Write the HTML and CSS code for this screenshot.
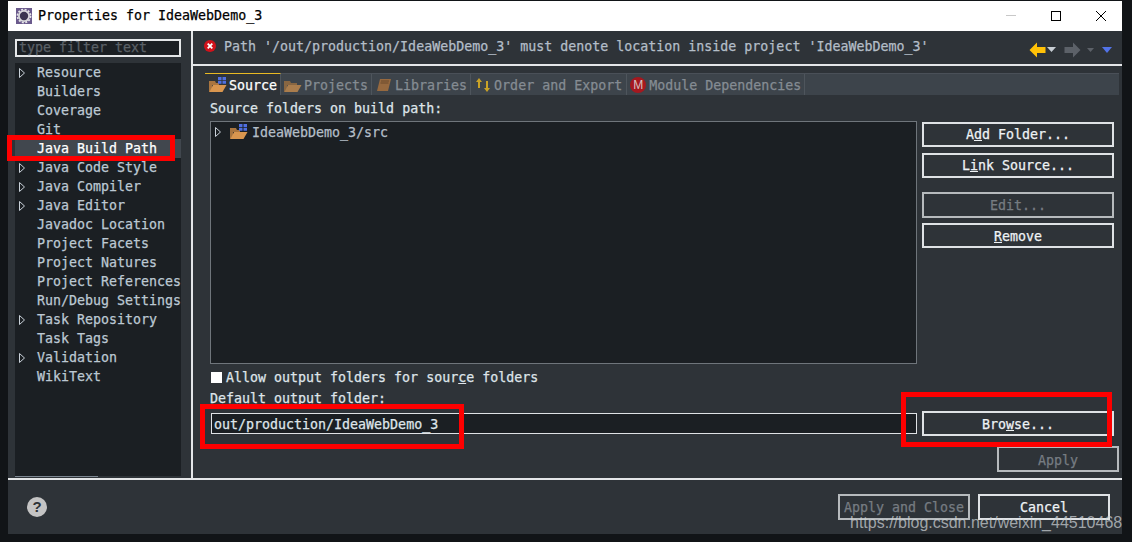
FILE: index.html
```html
<!DOCTYPE html>
<html lang="en">
<head>
<meta charset="utf-8">
<title>Properties for IdeaWebDemo_3</title>
<link rel="stylesheet" href="styles.css">
</head>
<body>
<svg class="defs" width="0" height="0" aria-hidden="true">
  <symbol id="arrow" viewBox="0 0 8 12"><path d="M1.5 1.5 L6.5 6 L1.5 10.5 Z" fill="none" stroke="#c9d1d9" stroke-width="1"/></symbol>
  <symbol id="folder" viewBox="0 0 18 16"><path d="M0 4 H6 L7 6 H13 V8 H0 Z" fill="#a9753f"/><path d="M0 6 H3 V15 H0 Z" fill="#a9753f"/><path d="M4 8 H17.5 L13.5 15 H0.5 Z" fill="#d9964f"/></symbol>
  <symbol id="srcfolder" viewBox="0 0 18 16"><path d="M0 4 H6 L7 6 H10 V8 H0 Z" fill="#a9753f"/><path d="M0 6 H3 V15 H0 Z" fill="#a9753f"/><path d="M4 8 H17.5 L13.5 15 H0.5 Z" fill="#d9964f"/><path d="M9 0 H12.5 V3 H9 Z M13.5 0 H17 V3 H13.5 Z M9 3.8 H12.5 V6.8 H9 Z M13.5 3.8 H17 V6.8 H13.5 Z" fill="#4f6fe0"/></symbol>
</svg>
<div class="window">
  <header class="titlebar">
    <svg class="appicon" width="16" height="16" viewBox="0 0 16 16"><rect width="16" height="16" fill="#6a5a8c"/><circle cx="8" cy="8" r="6" fill="#d8d8dc"/><circle cx="8" cy="8" r="6.6" fill="none" stroke="#e8e8ea" stroke-width="1.6" stroke-dasharray="2 1.5"/><circle cx="8" cy="8" r="4.2" fill="#3a3450"/></svg>
    <span class="title">Properties for IdeaWebDemo_3</span>
    <div class="winctl">
      <svg width="10" height="2" viewBox="0 0 10 2"><rect width="10" height="1" fill="#c8c8c8"/></svg>
      <svg width="10" height="10" viewBox="0 0 10 10"><rect x=".5" y=".5" width="9" height="9" fill="none" stroke="#000"/></svg>
      <svg width="10" height="10" viewBox="0 0 10 10"><path d="M0 0 L10 10 M10 0 L0 10" stroke="#000" stroke-width="1"/></svg>
    </div>
  </header>
  <div class="main">
    <aside class="sidebar">
      <div class="filter"><span class="filter-text">type filter text</span></div>
      <ul class="tree">
        <li class="node"><svg class="arrow"><use href="#arrow"/></svg>Resource</li>
        <li class="node">Builders</li>
        <li class="node">Coverage</li>
        <li class="node">Git</li>
        <li class="node selected">Java Build Path</li>
        <li class="node"><svg class="arrow"><use href="#arrow"/></svg>Java Code Style</li>
        <li class="node"><svg class="arrow"><use href="#arrow"/></svg>Java Compiler</li>
        <li class="node"><svg class="arrow"><use href="#arrow"/></svg>Java Editor</li>
        <li class="node">Javadoc Location</li>
        <li class="node">Project Facets</li>
        <li class="node">Project Natures</li>
        <li class="node">Project References</li>
        <li class="node">Run/Debug Settings</li>
        <li class="node"><svg class="arrow"><use href="#arrow"/></svg>Task Repository</li>
        <li class="node">Task Tags</li>
        <li class="node"><svg class="arrow"><use href="#arrow"/></svg>Validation</li>
        <li class="node">WikiText</li>
      </ul>
      <div class="hscroll"></div>
    </aside>
    <section class="content">
      <div class="message">
        <svg class="erricon" width="12" height="12" viewBox="0 0 12 12"><circle cx="6" cy="6" r="6" fill="#d0121b"/><path d="M3.7 3.7 L8.3 8.3 M8.3 3.7 L3.7 8.3" stroke="#fff" stroke-width="1.8"/></svg>
        <span class="msg-text">Path '/out/production/IdeaWebDemo_3' must denote location inside project 'IdeaWebDemo_3'</span>
        <div class="nav">
          <svg width="17" height="16" viewBox="0 0 17 16"><path d="M8 0.5 L0.5 8 L8 15.5 V11 H16.5 V5 H8 Z" fill="#ffc107"/></svg>
          <svg class="caret" width="9" height="5" viewBox="0 0 9 5"><path d="M0 0 H9 L4.5 5 Z" fill="#c8ced4"/></svg>
          <svg class="gap" width="17" height="16" viewBox="0 0 17 16"><path d="M9 0.5 L16.5 8 L9 15.5 V11 H0.5 V5 H9 Z" fill="#5c6168"/></svg>
          <svg class="caret2" width="7" height="4" viewBox="0 0 7 4"><path d="M0 0 H7 L3.5 4 Z" fill="#5c6168"/></svg>
          <svg class="gap" width="10" height="6" viewBox="0 0 10 6"><path d="M0 0 H10 L5 6 Z" fill="#5273e8"/></svg>
        </div>
      </div>
      <div class="pane">
        <nav class="tabs">
          <div class="tab active"><svg class="tabicon"><use href="#srcfolder"/></svg>Source</div>
          <div class="tab"><svg class="tabicon dim"><use href="#folder"/></svg>Projects</div>
          <div class="tab"><svg class="tabicon" viewBox="0 0 16 16"><path d="M4 2 H15 L12 14 H1 Z" fill="#96693f"/><path d="M5 4 H13 M4.5 6 H12.5" stroke="#6b4a2c"/></svg>Libraries</div>
          <div class="tab order"><svg class="tabicon" viewBox="0 0 16 16"><path d="M4 1 L7 5 H5 V11 H3 V5 H1 Z M11 4 H13 V11 H15 L12 15 L9 11 H11 Z" fill="#c9a227"/></svg>Order and Export</div>
          <div class="tab"><span class="mbadge">M</span>Module Dependencies</div>
        </nav>
        <div class="tabbody">
          <div class="label srclabel">Source folders on build path:</div>
          <div class="srcgrid">
            <div class="srctree"><div class="srcrow"><svg class="arrow"><use href="#arrow"/></svg><svg class="rowicon"><use href="#srcfolder"/></svg>IdeaWebDemo_3/src</div></div>
            <div class="btncol">
              <button class="btn">A<u>d</u>d Folder...</button>
              <button class="btn">L<u>i</u>nk Source...</button>
              <button class="btn disabled spaced">Edit...</button>
              <button class="btn nudge"><u>R</u>emove</button>
            </div>
          </div>
          <label class="check"><span class="box"></span>Allow output folders for sour<u>c</u>e folders</label>
          <div class="label outlabel">Default output folder:</div>
          <div class="outrow">
            <div class="input">out/production/IdeaWebDemo_3</div>
            <button class="btn browse nudge">Bro<u>w</u>se...</button>
          </div>
          <div class="applyrow"><button class="btn disabled apply nudge">Apply</button></div>
        </div>
      </div>
    </section>
  </div>
  <footer class="footer">
    <svg class="help" width="20" height="20" viewBox="0 0 20 20"><circle cx="10" cy="10" r="10" fill="#c4c4c4"/><text x="10" y="15" text-anchor="middle" class="helpq">?</text></svg>
    <div class="footbtns">
      <button class="btn disabled foot">Apply and Close</button>
      <button class="btn foot">Cancel</button>
    </div>
  </footer>
</div>
<div class="mark mark-a"></div>
<div class="mark mark-b"></div>
<div class="mark mark-c"></div>
<div class="watermark">https://blog.csdn.net/weixin_44510468</div>
</body>
</html>
```
FILE: styles.css
```css
* { box-sizing: border-box; }
html, body { margin: 0; padding: 0; }
body { width: 1132px; height: 542px; background: #111417; overflow: hidden; position: relative; padding: 1px 0 0 8px;
  font-family: "DejaVu Sans Mono", "Liberation Mono", monospace; font-size: 13.3px; color: #bcc8d3; -webkit-text-stroke: .25px currentColor; }
.defs { position: absolute; }
.window { width: 1114px; height: 533px; background: #2e3338; display: flex; flex-direction: column; }
.titlebar { height: 30px; flex: none; background: #fff; color: #000; display: flex; align-items: center; padding-left: 8px; }
.appicon { margin-right: 6px; }
.title { line-height: 30px; }
.winctl { margin-left: auto; display: flex; align-items: center; gap: 35px; padding-right: 16px; }
.main { flex: 1; display: flex; min-height: 0; }
.sidebar { width: 183px; flex: none; padding: 8px 0 0 7px; display: flex; flex-direction: column; position: relative; }
.filter { width: 166px; height: 18px; border: 2px solid #e4e6e8; background: #1b1f23; margin-bottom: 6px; padding-left: 2px; line-height: 14px; }
.filter-text { color: #5b6167; }
.tree { list-style: none; margin: 0; padding: 0; width: 166px; height: 413px; background: #1b1f23; overflow: hidden; }
.node { height: 19px; line-height: 19px; padding-left: 22px; position: relative; white-space: nowrap; }
.node .arrow { position: absolute; left: 3px; top: 4px; width: 8px; height: 12px; }
.node.selected { background: #41474e; color: #fff; }
.hscroll { position: absolute; left: 7px; bottom: 1px; width: 83px; height: 1px; background: #7d8792; }
.content { flex: 1; display: flex; flex-direction: column; border-left: 2px solid #e4e6e8; min-width: 0; }
.message { height: 35px; flex: none; display: flex; align-items: center; padding-left: 11px; border-bottom: 2px solid #e4e6e8; padding-bottom: 3px; }
.erricon { margin-right: 8px; }
.msg-text { color: #b4bec8; }
.nav { margin-left: auto; display: flex; align-items: center; padding-right: 10px; padding-top: 7px; }
.nav .caret { margin-left: 1px; }
.nav .caret2 { margin-left: 6px; }
.nav .gap { margin-left: 8px; }
.pane { flex: 1; padding: 7px 3px 0 12px; display: flex; flex-direction: column; min-height: 0; }
.tabs { height: 22px; flex: none; display: flex; background: #3d444b; border-top: 1px solid #4a5058; color: #858c93; }
.tab { display: flex; align-items: center; padding: 1px 3px 0; border-right: 1px solid #4e555c; white-space: nowrap; line-height: 21px; }
.tab.order { padding-right: 4px; }
.tab.active { background: #2e3338; color: #fff; border-top: 1px solid #e8b923; margin-top: -1px; padding-left: 4px; padding-right: 5px; width: 76px; }
.tabicon { width: 18px; height: 16px; margin-right: 2px; flex: none; }
.tabicon.dim { opacity: .7; }
.mbadge { width: 16px; height: 16px; border-radius: 50%; background: #a5181f; color: #d8c0c0; font: 12px/16px "Liberation Sans", sans-serif; -webkit-text-stroke: 0; text-align: center; margin-right: 3px; flex: none; }
.tabbody { flex: 1; padding-left: 5px; min-height: 0; }
.label { color: #dfe5ea; line-height: 16px; }
.srclabel { margin-top: 6px; height: 20px; }
.srcgrid { display: flex; height: 243px; }
.srctree { width: 707px; flex: none; background: #1b1f23; border: 1px solid #6f757b; padding: 1px 0 0 3px; }
.srcrow { display: flex; align-items: center; height: 18px; white-space: nowrap; color: #b4bec8; }
.srcrow .arrow { width: 8px; height: 12px; margin-right: 8px; flex: none; }
.rowicon { width: 18px; height: 16px; margin-right: 4px; flex: none; }
.btncol { flex: 1; padding-left: 5px; display: flex; flex-direction: column; padding-top: 1px; }
.btn { font: inherit; width: 192px; height: 25px; background: #2e3338; color: #eef2f5; border: 2px solid #dfe2e5; padding: 0; margin: 0 0 6px; cursor: default; -webkit-text-stroke: .25px currentColor; }
.btn u { text-decoration: underline; }
.btn.nudge { padding-top: 2px; }
.btn.disabled { color: #767c82; border-color: #b6babd; }
.btn.spaced { margin-top: 8px; height: 26px; margin-bottom: 5px; }
.check { display: flex; align-items: center; height: 14px; margin-top: 6px; color: #dfe5ea; white-space: nowrap; }
.box { width: 11px; height: 11px; background: #fff; margin: 0 4px 0 1px; flex: none; }
.outlabel { margin-top: 7px; height: 20px; line-height: 15px; }
.outrow { display: flex; align-items: center; height: 25px; }
.input { width: 706px; flex: none; height: 21px; border: 1px solid #dfe2e5; background: #1b1f23; color: #dfe5ea; line-height: 21px; padding-left: 2px; margin: 0 5px 0 1px; }
.browse { margin: 0; height: 25px; }
.applyrow { display: flex; justify-content: flex-end; margin-top: 10px; }
.apply { width: 122px; height: 26px; margin: 0; }
.footer { height: 56px; flex: none; border-top: 2px solid #e4e6e8; display: flex; align-items: center; padding: 0 12px 2px 19px; }
.help { flex: none; margin-top: 1px; }
.helpq { font: bold 15px "Liberation Sans", sans-serif; fill: #2e3338; -webkit-text-stroke: 0; }
.footbtns { margin-left: auto; display: flex; gap: 8px; margin-top: 2px; }
.foot { width: 132px; height: 26px; margin: 0; }
.mark { position: absolute; border: 5px solid #fe0000; pointer-events: none; }
.mark-a { left: 7px; top: 135px; width: 168px; height: 26px; }
.mark-b { left: 200px; top: 404px; width: 264px; height: 45px; }
.mark-c { left: 901px; top: 392px; width: 211px; height: 55px; }
.watermark { position: absolute; left: 850px; top: 513px; font: 16px/19px "Liberation Sans", sans-serif; -webkit-text-stroke: 0; color: rgba(205,210,214,.72); white-space: nowrap; }
```
